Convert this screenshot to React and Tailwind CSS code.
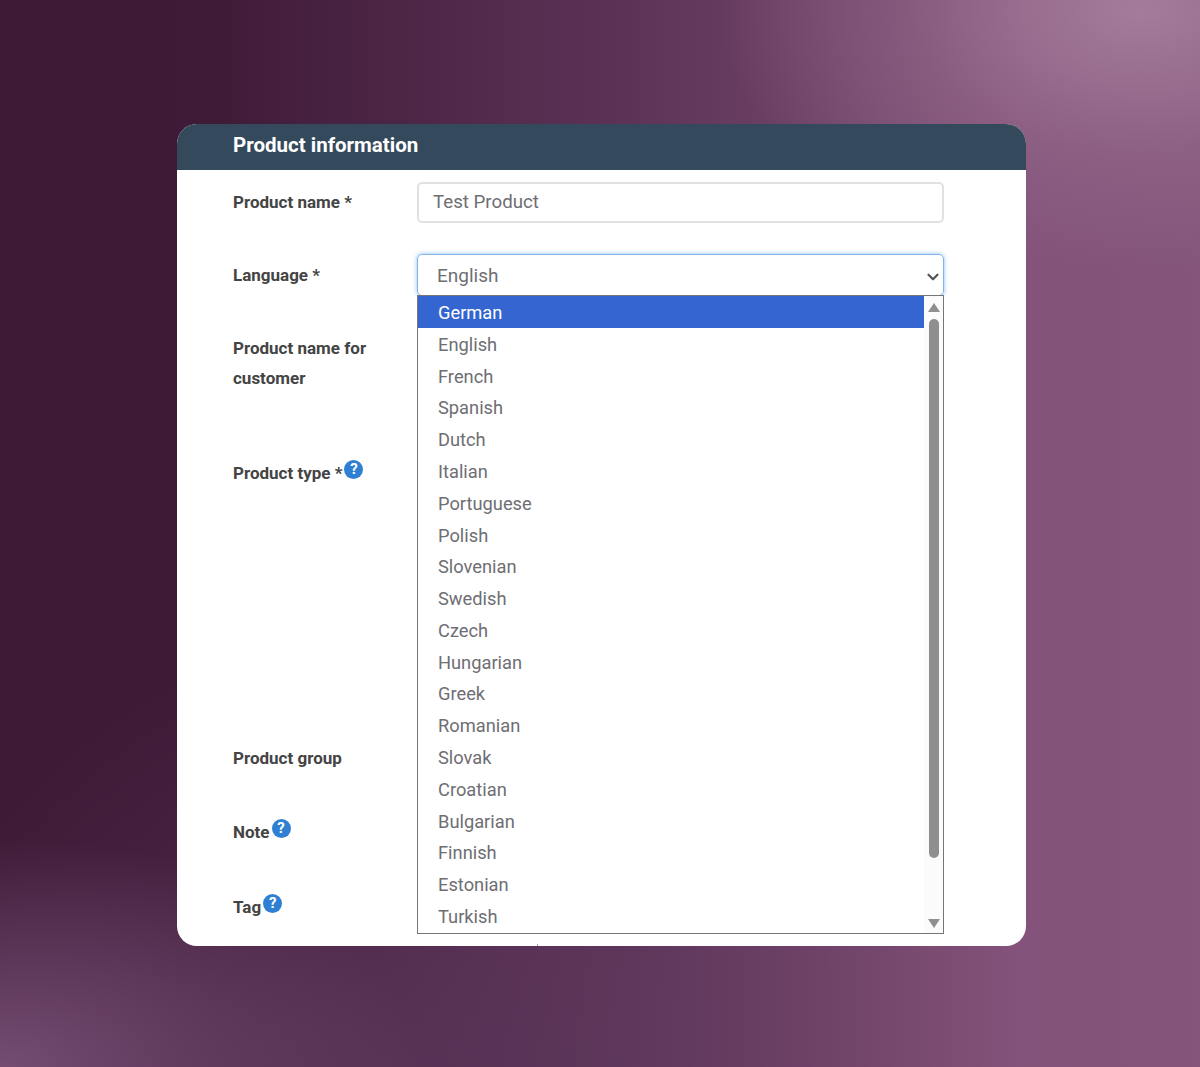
import React from "react";
import { ChevronDown } from "lucide-react";

const languages = [
  "German", "English", "French", "Spanish", "Dutch", "Italian", "Portuguese",
  "Polish", "Slovenian", "Swedish", "Czech", "Hungarian", "Greek", "Romanian",
  "Slovak", "Croatian", "Bulgarian", "Finnish", "Estonian", "Turkish",
];

const Help = () => (
  <span className="ml-[2px] mt-[2px] inline-flex h-[19px] w-[19px] items-center justify-center rounded-full bg-[#2f80d2] text-[15px] font-bold leading-none text-white">
    ?
  </span>
);

const Label = ({ children, help, className = "" }) => (
  <div className={`flex w-[184px] shrink-0 items-start text-[17px] font-bold leading-[30px] text-[#444444] ${className}`}>
    <span>{children}</span>
    {help && <Help />}
  </div>
);

const LanguageList = () => (
  <div className="absolute left-0 top-[41px] z-10 flex h-[639px] w-[527px] overflow-hidden border border-[#767676] bg-white">
    <ul className="min-w-0 flex-1">
      {languages.map((lang, i) => (
        <li
          key={lang}
          className={`flex h-[31.8px] items-center pl-5 pt-[1.5px] text-[18.3px] ${i === 0 ? "bg-[#3565d0] text-white" : "text-[#6e6e73]"}`}
        >
          {lang}
        </li>
      ))}
    </ul>
    <div className="flex w-[19px] shrink-0 flex-col items-center bg-[#fbfbfb]">
      <div className="mt-[7px] h-0 w-0 border-x-[6px] border-b-[9px] border-x-transparent border-b-[#8f8f8f]" />
      <div className="mt-[7px] h-[539px] w-[10px] rounded-full bg-[#8f8f8f]" />
      <div className="mt-[61px] h-0 w-0 border-x-[6px] border-t-[9px] border-x-transparent border-t-[#8f8f8f]" />
    </div>
  </div>
);

export default function App() {
  return (
    <div
      className="flex h-[1067px] items-start justify-center bg-[radial-gradient(ellipse_420px_260px_at_1140px_10px,rgba(168,128,158,0.9),rgba(150,110,142,0.45)_55%,transparent),radial-gradient(ellipse_420px_230px_at_0px_1067px,rgba(125,85,125,0.85),transparent),radial-gradient(ellipse_520px_420px_at_400px_1067px,rgba(100,65,105,0.45),transparent),linear-gradient(90deg,#3e1a36_0%,#401b38_18%,#5c3357_52%,#84527a_85%,#85557b_100%)] pt-[124px] pl-[3px] font-['Roboto',sans-serif]"
    >
      <div className="relative h-[822px] w-[849px] overflow-hidden rounded-[20px] bg-white">
        <div className="flex h-[45.5px] items-center bg-[#34495c] pb-[2px] pl-14 text-[20.5px] font-bold text-white">
          Product information
        </div>

        <div className="pl-14 pt-[12.5px]">
          <div className="flex h-[72px]">
            <Label className="pt-[5px]">Product name *</Label>
            <div className="flex h-[41px] w-[527px] items-center rounded-[5px] border-2 border-[#dfe1e3] pb-px pl-[14px] text-[18.7px] text-[#6e6e73]">
              Test Product
            </div>
          </div>

          <div className="flex h-[79px]">
            <Label className="pt-[6px]">Language *</Label>
            <div className="relative h-[42px] w-[527px]">
              <div className="flex h-[42px] items-center justify-between rounded-[5px] border border-[#84b4e6] pl-[19px] pr-px pt-[3px] text-[19px] text-[#6e6e73] shadow-[0_0_4px_rgba(90,160,240,0.7)]">
                English
                <ChevronDown size={18} strokeWidth={3} className="text-[#555555]" />
              </div>
              <LanguageList />
            </div>
          </div>

          <div className="flex h-[125px]">
            <Label>
              Product name for
              <br />
              customer
            </Label>
          </div>

          <div className="flex h-[285px]">
            <Label help>Product type *</Label>
          </div>

          <div className="flex h-[74px]">
            <Label>Product group</Label>
          </div>

          <div className="flex h-[75px]">
            <Label help>Note</Label>
          </div>

          <div className="flex h-[40px]">
            <Label help>Tag</Label>
          </div>
        </div>

        {/* bit of the next field peeking out under the list */}
        <div className="absolute bottom-0 left-[360px] h-[2px] w-px bg-[#9a9a9a]" />
      </div>
    </div>
  );
}
